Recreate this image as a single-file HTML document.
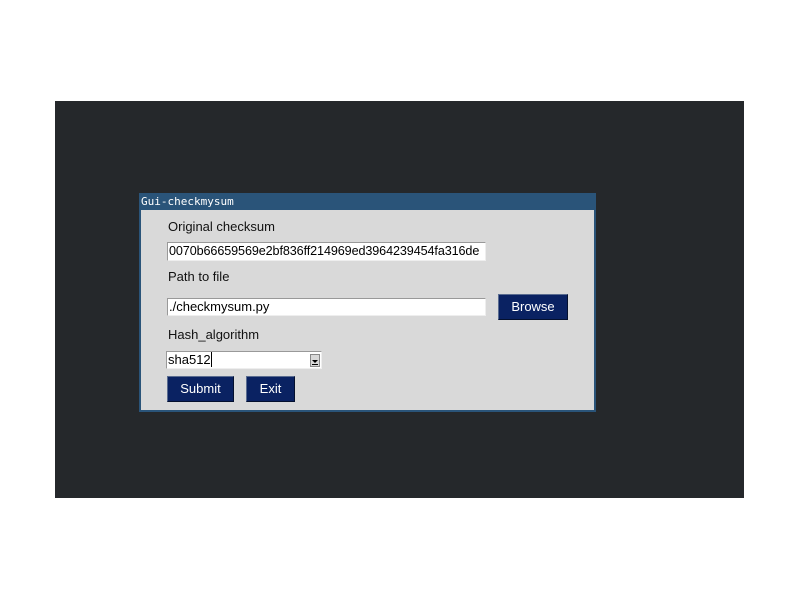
<!DOCTYPE html>
<html><head><style>
body{margin:0;width:800px;height:600px;background:#fff;position:relative;font-family:"Liberation Sans",sans-serif;overflow:hidden}
.a{position:absolute}
.bg{left:55px;top:101px;width:689px;height:397px;background:#25282b}
.win{left:139px;top:193px;width:453px;height:217px;background:#d9d9d9;border:2px solid #2a5479;border-top:none}
.title{left:139px;top:193px;width:457px;height:17px;background:#2a5479;color:#fff;font-family:"DejaVu Sans Mono",monospace;font-size:11px;line-height:17px;padding-left:2px;box-sizing:border-box}
.lbl{font-size:13px;color:#111}
.ent{background:#fff;border:1px solid #999;border-right-color:#eee;border-bottom-color:#eee;box-sizing:border-box;font-size:13px;line-height:17px;padding-left:1px;color:#000;overflow:hidden;white-space:nowrap}
.btn{background:#0a2262;color:#fff;font-size:13px;text-align:center;box-sizing:border-box;border:1px solid #5a6c90;border-right-color:#04102e;border-bottom-color:#04102e}
</style></head><body>
<div class="a bg"></div>
<div class="a win"></div>
<div class="a title">Gui-checkmysum</div>
<div class="a lbl" style="left:168px;top:219px">Original checksum</div>
<div class="a ent" style="left:167px;top:242px;width:319px;height:19px;font-size:12.6px;letter-spacing:-0.1px">0070b66659569e2bf836ff214969ed3964239454fa316de</div>
<div class="a lbl" style="left:168px;top:269px">Path to file</div>
<div class="a ent" style="left:167px;top:298px;width:319px;height:18px;line-height:16px">./checkmysum.py</div>
<div class="a btn" style="left:498px;top:294px;width:70px;height:26px;line-height:23px">Browse</div>
<div class="a lbl" style="left:168px;top:327px">Hash_algorithm</div>
<div class="a ent" style="left:166px;top:351px;width:156px;height:18px;line-height:15px">sha512<span style="border-left:1px solid #000;margin-left:0"></span></div>
<div class="a" style="left:310px;top:354px;width:10px;height:13px;background:#d9d9d9;border:1px solid #888;box-sizing:border-box"></div>
<div class="a" style="left:312px;top:360px;width:0;height:0;border-left:3px solid transparent;border-right:3px solid transparent;border-top:3px solid #000"></div>
<div class="a" style="left:312px;top:364px;width:6px;height:1px;background:#000"></div>
<div class="a btn" style="left:167px;top:376px;width:67px;height:26px;line-height:23px">Submit</div>
<div class="a btn" style="left:246px;top:376px;width:49px;height:26px;line-height:23px">Exit</div>
</body></html>
